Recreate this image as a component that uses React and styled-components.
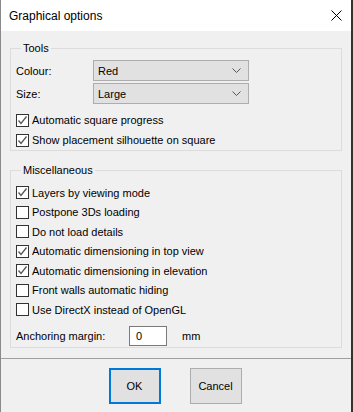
import React from "react";
import styled, { createGlobalStyle } from "styled-components";

const GlobalStyle = createGlobalStyle`
  html, body {
    margin: 0;
    padding: 0;
    background: #3b2f2c;
  }
  body {
    font-family: "Liberation Sans", Arial, sans-serif;
    font-size: 11px;
    color: #000;
  }
`;

const Window = styled.div`
  width: 351px;
  height: 412px;
  background: #f0f0f0;
  border-left: 1px solid #8a8a8a;
  display: flex;
  flex-direction: column;
  box-sizing: border-box;
`;

const TitleBar = styled.div`
  height: 31px;
  background: #fff;
  display: flex;
  align-items: center;
  justify-content: space-between;
  padding: 0 9px 0 8px;
  font-size: 12px;
  flex-shrink: 0;
`;

const Body = styled.div`
  padding: 10px 9px 0 9px;
  display: flex;
  flex-direction: column;
  gap: 12px;
`;

const Group = styled.fieldset`
  margin: 0;
  border: 1px solid #dcdcdc;
  padding: ${(p) => p.$pad || "5px 5px 0 5px"};
  min-width: 0;
`;

const Legend = styled.legend`
  padding: 0 2px;
  margin-left: 5px;
  line-height: 14px;
`;

const FieldRow = styled.div`
  display: grid;
  grid-template-columns: 77px 156px;
  align-items: center;
  height: 21px;
  margin-bottom: 2px;
`;

const Select = styled.div`
  height: 21px;
  box-sizing: border-box;
  border: 1px solid #adadad;
  background: #e1e1e1;
  display: flex;
  align-items: center;
  justify-content: space-between;
  padding: 0 7px 0 4px;
`;

const CheckRow = styled.label`
  display: flex;
  align-items: center;
  height: ${(p) => p.$h || "20px"};
  gap: 3px;
`;

const Box = styled.span`
  width: 13px;
  height: 13px;
  box-sizing: border-box;
  border: 1px solid #333;
  background: #fff;
  display: flex;
  align-items: center;
  justify-content: center;
  flex-shrink: 0;
`;

const ChecksGap = styled.div`
  height: 4px;
`;

const MarginRow = styled.div`
  display: flex;
  align-items: center;
  margin-top: 6px;
  height: 21px;
`;

const MarginLabel = styled.span`
  width: 113px;
`;

const NumberInput = styled.div`
  width: 38px;
  height: 20px;
  box-sizing: border-box;
  border: 1px solid #7a7a7a;
  background: #fff;
  display: flex;
  align-items: center;
  padding-left: 6px;
  margin-right: 15px;
`;

const Separator = styled.div`
  margin-top: 10px;
  height: 1px;
  background: #a0a0a0;
`;

const Buttons = styled.div`
  display: flex;
  justify-content: center;
  gap: 29px;
  padding-top: 9px;
  padding-right: 2px;
`;

const Button = styled.div`
  width: 52px;
  height: 36px;
  box-sizing: border-box;
  background: #e1e1e1;
  border: ${(p) => (p.$default ? "2px solid #0078d7" : "1px solid #adadad")};
  display: flex;
  align-items: center;
  justify-content: center;
`;

const Check = () => (
  <svg width="11" height="11" viewBox="0 0 11 11">
    <path d="M1.5 5.5 L4 8.5 L9.5 1.5" fill="none" stroke="#555" strokeWidth="1.3" />
  </svg>
);

const Chevron = () => (
  <svg width="9" height="5" viewBox="0 0 9 5">
    <path d="M0.5 0.5 L4.5 4.5 L8.5 0.5" fill="none" stroke="#555" strokeWidth="1" />
  </svg>
);

const CheckItem = ({ checked, children, h }) => (
  <CheckRow $h={h}>
    <Box>{checked && <Check />}</Box>
    <span>{children}</span>
  </CheckRow>
);

const misc = [
  ["Layers by viewing mode", true],
  ["Postpone 3Ds loading", false],
  ["Do not load details", false],
  ["Automatic dimensioning in top view", true],
  ["Automatic dimensioning in elevation", true],
  ["Front walls automatic hiding", false],
  ["Use DirectX instead of OpenGL", false],
];

export default function App() {
  return (
    <>
      <GlobalStyle />
      <Window>
        <TitleBar>
          <span>Graphical options</span>
          <svg width="11" height="11" viewBox="0 0 11 11">
            <path d="M0.5 0.5 L10.5 10.5 M10.5 0.5 L0.5 10.5" stroke="#000" strokeWidth="1" />
          </svg>
        </TitleBar>
        <Body>
          <Group>
            <Legend>Tools</Legend>
            <FieldRow>
              <span>Colour:</span>
              <Select>
                <span>Red</span>
                <Chevron />
              </Select>
            </FieldRow>
            <FieldRow>
              <span>Size:</span>
              <Select>
                <span>Large</span>
                <Chevron />
              </Select>
            </FieldRow>
            <ChecksGap />
            <CheckItem checked>Automatic square progress</CheckItem>
            <CheckItem checked>Show placement silhouette on square</CheckItem>
          </Group>
          <Group $pad="6px 5px 0 5px">
            <Legend>Miscellaneous</Legend>
            {misc.map(([text, on]) => (
              <CheckItem key={text} checked={on} h="19.5px">
                {text}
              </CheckItem>
            ))}
            <MarginRow>
              <MarginLabel>Anchoring margin:</MarginLabel>
              <NumberInput>0</NumberInput>
              <span>mm</span>
            </MarginRow>
          </Group>
        </Body>
        <Separator />
        <Buttons>
          <Button $default>OK</Button>
          <Button>Cancel</Button>
        </Buttons>
      </Window>
    </>
  );
}
